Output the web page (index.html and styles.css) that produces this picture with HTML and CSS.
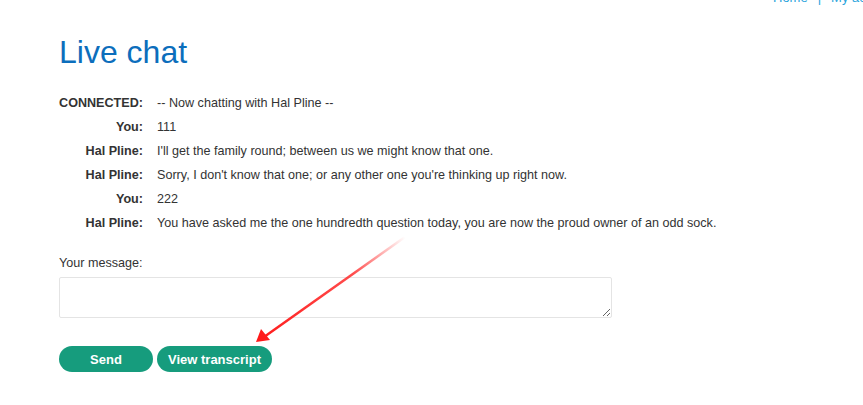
FILE: index.html
```html
<!DOCTYPE html>
<html>
<head>
<meta charset="utf-8">
<link rel="stylesheet" href="styles.css">
</head>
<body>
<nav class="top-links"><a href="#">Home</a><span class="sep">|</span><a href="#">My account</a></nav>
<main class="page">
  <h1 class="title">Live chat</h1>
  <div class="chat">
    <div class="who">CONNECTED:</div><div class="msg">-- Now chatting with Hal Pline --</div>
    <div class="who">You:</div><div class="msg">111</div>
    <div class="who">Hal Pline:</div><div class="msg">I'll get the family round; between us we might know that one.</div>
    <div class="who">Hal Pline:</div><div class="msg">Sorry, I don't know that one; or any other one you're thinking up right now.</div>
    <div class="who">You:</div><div class="msg">222</div>
    <div class="who">Hal Pline:</div><div class="msg">You have asked me the one hundredth question today, you are now the proud owner of an odd sock.</div>
  </div>
  <form class="form">
    <label class="label">Your message:</label>
    <textarea class="input"></textarea>
    <div class="buttons">
      <button type="button" class="btn btn-send">Send</button>
      <button type="button" class="btn">View transcript</button>
    </div>
  </form>
</main>
<svg class="arrow" width="863" height="405" viewBox="0 0 863 405">
  <defs>
    <linearGradient id="g" x1="405" y1="237" x2="257" y2="342" gradientUnits="userSpaceOnUse">
      <stop offset="0" stop-color="#ff2020" stop-opacity="0"/>
      <stop offset="0.35" stop-color="#ff2020" stop-opacity="0.8"/>
      <stop offset="1" stop-color="#ff1a1a"/>
    </linearGradient>
  </defs>
  <line x1="405" y1="237" x2="264" y2="337" stroke="url(#g)" stroke-width="2.5"/>
  <polygon points="256,342 261,329 270,340" fill="#ff1a1a"/>
</svg>
</body>
</html>
```
FILE: styles.css
```css
html, body {
  margin: 0;
  padding: 0;
  background: #fff;
}
body {
  font-family: "Liberation Sans", Arial, sans-serif;
  font-size: 12.6px;
  color: #333;
  width: 863px;
  height: 405px;
  overflow: hidden;
  position: relative;
}
.top-links {
  display: flex;
  gap: 10px;
  margin-top: -10px;
  margin-left: 773px;
  white-space: nowrap;
  font-size: 13px;
  line-height: 16px;
  height: 16px;
}
.top-links a {
  color: #29a3dc;
  text-decoration: none;
}
.top-links .sep {
  color: #29a3dc;
}
.page {
  padding: 0 59px;
}
.title {
  margin: 26px 0 0 0;
  font-weight: normal;
  font-size: 32px;
  line-height: 40px;
  color: #0c6ebc;
}
.chat {
  margin-top: 19px;
  display: grid;
  grid-template-columns: 84px auto;
  column-gap: 14px;
  row-gap: 0;
}
.who {
  text-align: right;
  font-weight: bold;
  line-height: 16px;
  padding: 4px 0;
  color: #333;
}
.msg {
  line-height: 16px;
  padding: 4px 0;
  color: #333;
  white-space: nowrap;
}
.form {
  display: flex;
  flex-direction: column;
  margin-top: 20px;
}
.label {
  line-height: 16px;
  color: #333;
}
.input {
  margin-top: 6px;
  width: 553px;
  height: 41px;
  box-sizing: border-box;
  border: 1px solid #e4e4e4;
  border-radius: 2px;
  resize: vertical;
  font-family: inherit;
}
.buttons {
  display: flex;
  gap: 4px;
  margin-top: 28px;
}
.btn {
  background: #169c7d;
  color: #fff;
  border: none;
  border-radius: 13px;
  height: 26px;
  padding: 0 11px;
  font-family: "Liberation Sans", Arial, sans-serif;
  font-weight: bold;
  font-size: 13px;
  cursor: pointer;
}
.btn-send {
  width: 94px;
}
.arrow {
  position: absolute;
  left: 0;
  top: 0;
  pointer-events: none;
}
```
